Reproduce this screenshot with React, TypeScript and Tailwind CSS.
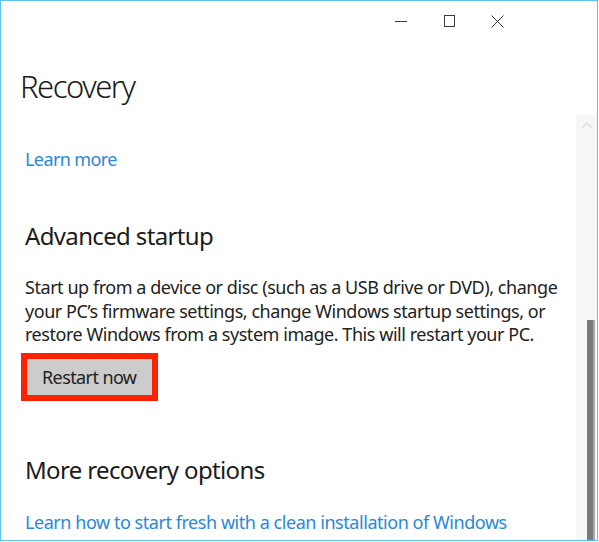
import React from "react";

const font = { fontFamily: '"Noto Sans", "Open Sans", sans-serif' };

export default function App() {
  return (
    <div className="w-[599px] h-[542px] bg-white overflow-hidden" style={font}>
      <div className="w-[598px] h-[541px] border border-[#5ec3f0] flex flex-col overflow-hidden">
        {/* title bar */}
        <div className="h-[40px] flex justify-end items-center pr-[76px] shrink-0">
          <div className="w-[48px] h-[40px] flex items-center justify-center">
            <svg width="12" height="12" viewBox="0 0 12 12">
              <line x1="0" y1="6.5" x2="12" y2="6.5" stroke="#3a3a3a" strokeWidth="1" />
            </svg>
          </div>
          <div className="w-[48px] h-[40px] flex items-center justify-center">
            <svg width="12" height="12" viewBox="0 0 12 12">
              <rect x="1.5" y="0.5" width="10" height="11" fill="none" stroke="#3a3a3a" strokeWidth="1" />
            </svg>
          </div>
          <div className="w-[48px] h-[40px] flex items-center justify-center">
            <svg width="13" height="13" viewBox="0 0 13 13">
              <path d="M0.5 0.5 L12.5 12.5 M12.5 0.5 L0.5 12.5" stroke="#3a3a3a" strokeWidth="1" />
            </svg>
          </div>
        </div>
        {/* page title */}
        <div className="mt-[25px] mb-[9px] pl-[19px] text-[31px] leading-[40px] font-light tracking-[-1.5px] text-[#1b1b1b] shrink-0">
          Recovery
        </div>
        {/* scroll region */}
        <div className="flex flex-1 min-h-0">
          <div className="flex-1 pl-[24px] pt-[32px] overflow-hidden">
            <div className="text-[18px] leading-[24px] tracking-[-0.6px] text-[#2b88d8]">Learn more</div>
            <div className="mt-[49px] text-[24px] leading-[32px] tracking-[-0.65px] text-[#1b1b1b]">
              Advanced startup
            </div>
            <div className="mt-[24px] text-[18px] leading-[23.5px] tracking-[-0.45px] text-[#222] whitespace-nowrap">
              <div>Start up from a device or disc (such as a USB drive or DVD), change</div>
              <div>your PC’s firmware settings, change Windows startup settings, or</div>
              <div>restore Windows from a system image. This will restart your PC.</div>
            </div>
            <div className="mt-[6px] ml-[-4px] w-fit border-[6px] border-[#ff2200]">
              <div className="bg-[#cccccc] pl-[15px] pr-[16px] pt-[2px] pb-[2px] text-[18px] leading-[32px] tracking-[-0.6px] text-[#222]">
                Restart now
              </div>
            </div>
            <div className="mt-[53px] text-[24px] leading-[32px] tracking-[-0.65px] text-[#1b1b1b]">
              More recovery options
            </div>
            <div className="mt-[24px] text-[18px] leading-[24px] tracking-[-0.45px] text-[#2b88d8] whitespace-nowrap">
              Learn how to start fresh with a clean installation of Windows
            </div>
          </div>
          <div className="w-[21px] bg-[#f7f7f7] flex flex-col items-start shrink-0">
            <div className="w-full flex justify-center pt-[7px]">
              <svg width="10" height="6" viewBox="0 0 10 6">
                <path d="M0.5 5.5 L5 1 L9.5 5.5" fill="none" stroke="#d6d6d6" strokeWidth="1.2" />
              </svg>
            </div>
            <div className="mt-[192px] ml-[11px] w-[8px] flex-1 bg-[#7a7a7a] border-r-2 border-[#a8a8a8]" />
          </div>
        </div>
      </div>
    </div>
  );
}
